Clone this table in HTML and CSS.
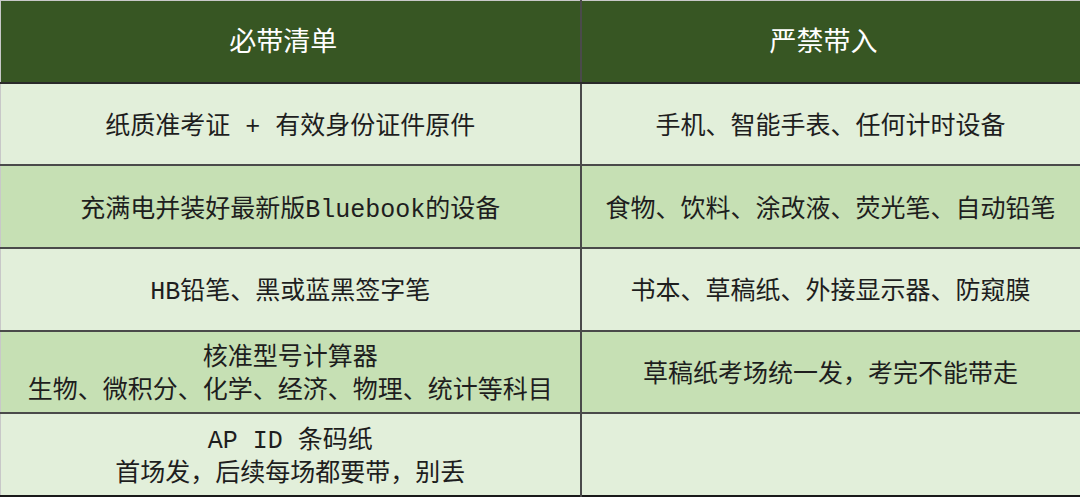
FILE: index.html
```html
<!DOCTYPE html>
<html lang="zh-CN">
<head>
<meta charset="utf-8">
<title>必带清单 / 严禁带入</title>
<link rel="stylesheet" href="styles.css">
</head>
<body>
<table class="checklist">
  <colgroup>
    <col class="col-left">
    <col class="col-right">
  </colgroup>
  <thead>
    <tr class="head-row">
      <th>必带清单</th>
      <th>严禁带入</th>
    </tr>
  </thead>
  <tbody>
    <tr class="row-light">
      <td>纸质准考证 + 有效身份证件原件</td>
      <td>手机、智能手表、任何计时设备</td>
    </tr>
    <tr class="row-mid">
      <td>充满电并装好最新版Bluebook的设备</td>
      <td>食物、饮料、涂改液、荧光笔、自动铅笔</td>
    </tr>
    <tr class="row-light">
      <td>HB铅笔、黑或蓝黑签字笔</td>
      <td>书本、草稿纸、外接显示器、防窥膜</td>
    </tr>
    <tr class="row-mid">
      <td>核准型号计算器<br>生物、微积分、化学、经济、物理、统计等科目</td>
      <td>草稿纸考场统一发，考完不能带走</td>
    </tr>
    <tr class="row-light">
      <td>AP ID 条码纸<br>首场发，后续每场都要带，别丢</td>
      <td></td>
    </tr>
  </tbody>
</table>
</body>
</html>
```

FILE: styles.css
```css
html, body {
  margin: 0;
  padding: 0;
  background: #ffffff;
}

.checklist {
  width: 1080px;
  height: 497px;
  border-collapse: collapse;
  table-layout: fixed;
  font-family: "Liberation Mono", "Noto Sans CJK SC", sans-serif;
  font-size: 25px;
  color: #1e1e1e;
  border-top: 1px solid #c8c8c8;
  border-left: 1px solid #c8c8c8;
  border-right: 2px solid #1a1a1a;
  border-bottom: 2px solid #1a1a1a;
}

.col-left { width: 580px; }
.col-right { width: 500px; }

.checklist th,
.checklist td {
  text-align: center;
  vertical-align: middle;
  padding: 7px 0 0 0;
  line-height: 33px;
  border-bottom: 2px solid #4a4a4a;
}

.checklist th + th,
.checklist td + td {
  border-left: 2px solid #4a4a4a;
}

.head-row {
  height: 82px;
  background: #375623;
}

.head-row th {
  color: #ffffff;
  font-weight: normal;
  font-size: 27px;
  padding-right: 14px;
  border-bottom: 2px solid #2a2a2a;
}

.row-light { height: 82px; background: #e2efda; }
.row-mid { height: 82px; background: #c6e0b4; }

.checklist tbody tr:last-child td {
  border-bottom: none;
}
```
